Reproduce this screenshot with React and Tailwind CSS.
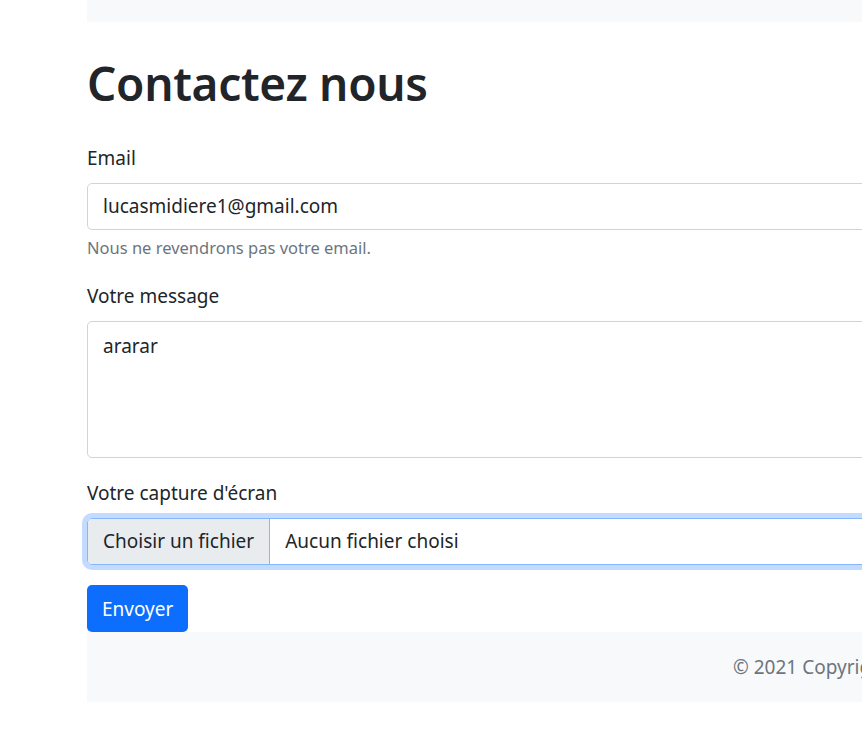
export default function App() {
  return (
    <div className="w-[862px] h-[733px] overflow-hidden bg-white text-[#212529]" style={{ fontFamily: '"Noto Sans", "Open Sans", sans-serif' }}>
      <div className="ml-[87px] w-[1300px]">
        <div className="h-[22px] bg-[#f8f9fa]" />
        <h1 className="mt-[31px] mb-[30px] text-[46px] leading-[60px] font-semibold tracking-[-0.3px]">Contactez nous</h1>
        <form>
          <label className="block text-[19px] leading-[30px] mb-[10px]">Email</label>
          <div className="h-[47px] border border-[#ced4da] rounded-[5px] flex items-center px-[15px] text-[19px]">lucasmidiere1@gmail.com</div>
          <div className="mt-[5px] text-[16.5px] leading-[26px] text-[#6c757d]">Nous ne revendrons pas votre email.</div>
          <label className="block mt-[20px] text-[19px] leading-[30px] mb-[10px]">Votre message</label>
          <div className="h-[137px] border border-[#ced4da] rounded-[5px] px-[15px] py-[9px] text-[19px] leading-[30px]">ararar</div>
          <label className="block mt-[20px] text-[19px] leading-[30px] mb-[10px]">Votre capture d'écran</label>
          <div className="h-[47px] border border-[#86b7fe] rounded-[5px] flex text-[19px] overflow-hidden shadow-[0_0_0_5px_rgba(13,110,253,0.25)]">
            <div className="bg-[#e9ecef] px-[15px] flex items-center border-r border-[#86b7fe]">Choisir un fichier</div>
            <div className="px-[15px] flex items-center">Aucun fichier choisi</div>
          </div>
          <div className="mt-[20px]">
            <button type="button" className="h-[47px] px-[15px] rounded-[5px] bg-[#0d6efd] text-white text-[19px] leading-[30px]">Envoyer</button>
          </div>
        </form>
        <div className="h-[70px] bg-[#f8f9fa] flex items-center pl-[646px] text-[19px] text-[#6c757d] whitespace-nowrap">© 2021 Copyright</div>
      </div>
    </div>
  );
}
